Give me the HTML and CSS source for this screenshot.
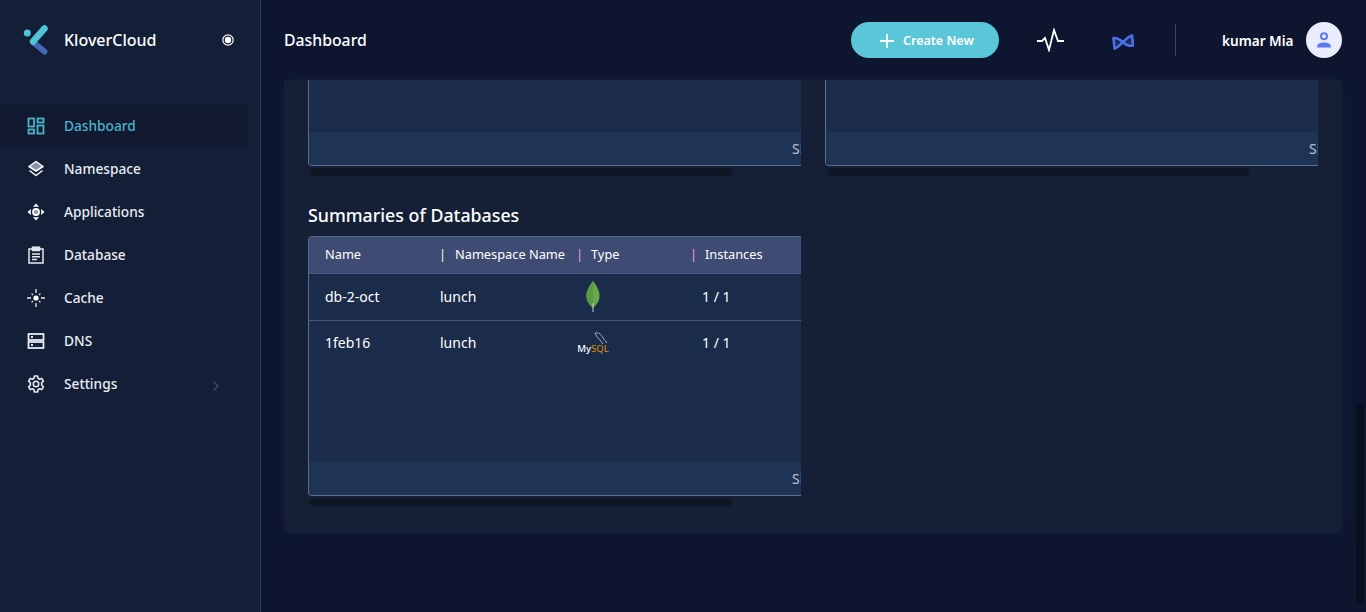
FILE: index.html
```html
<!DOCTYPE html>
<html>
<head>
  <meta charset="utf-8">
  <title>KloverCloud Dashboard</title>
  <link rel="stylesheet" href="styles.css">
</head>
<body>
<div class="app">
  <aside class="sidebar">
    <div class="brand">
      <svg class="brand-logo" width="28" height="30" viewBox="0 0 28 30" fill="none" stroke-linecap="round">
        <circle cx="4.300" cy="8" r="3.500" fill="#4fc3d8"/>
        <path d="M11 18 L21.500 26.500" stroke="#4468b8" stroke-width="6"/>
        <path d="M21.500 3.500 L10 16.500" stroke="#4fc3d8" stroke-width="6.500"/>
      </svg>
      <span class="brand-name">KloverCloud</span>
      <svg class="brand-dot" width="14" height="14" viewBox="0 0 14 14">
        <circle cx="7" cy="7" r="5.2" fill="none" stroke="#fff" stroke-width="1.2"/>
        <circle cx="7" cy="7" r="3.2" fill="#fff"/>
      </svg>
    </div>
    <nav class="menu">
      <a class="menu-item active">
        <svg class="menu-icon" viewBox="0 0 18 18" fill="none" stroke="#4bb4cb" stroke-width="1.800">
          <rect x="1.500" y="1.500" width="5.500" height="8"/><rect x="10.500" y="1.500" width="6" height="4"/>
          <rect x="1.500" y="12.500" width="5.500" height="4"/><rect x="10.500" y="8.500" width="6" height="8"/>
        </svg>
        <span>Dashboard</span>
      </a>
      <a class="menu-item">
        <svg class="menu-icon" viewBox="0 0 18 18" fill="none" stroke="#fff" stroke-width="1.500" stroke-linejoin="round">
          <path d="M9 1.500 L16 6.500 L9 11 L2 6.500 Z" fill="#8b93a8"/><path d="M2.500 10.500 L9 15.500 L15.500 10.500"/>
        </svg>
        <span>Namespace</span>
      </a>
      <a class="menu-item">
        <svg class="menu-icon" viewBox="0 0 18 18" fill="#fff">
          <circle cx="9" cy="9" r="3" fill="#8b93a8" stroke="#fff" stroke-width="1.800"/>
          <path d="M9 .5 L12 3.800 H6 Z M9 17.500 L12 14.200 H6 Z M.5 9 L3.800 6 V12 Z M17.500 9 L14.200 6 V12 Z"/>
        </svg>
        <span>Applications</span>
      </a>
      <a class="menu-item">
        <svg class="menu-icon" viewBox="0 0 18 18" fill="none" stroke="#e6e9f0" stroke-width="1.500">
          <path d="M5.500 3 H2 V17 H16 V3 H12.500"/><rect x="5.500" y="1.200" width="7" height="3.300" fill="#e6e9f0"/>
          <path d="M5 8 H13 M5 10.800 H13 M5 13.600 H10"/>
        </svg>
        <span>Database</span>
      </a>
      <a class="menu-item">
        <svg class="menu-icon" viewBox="0 0 18 18" fill="none" stroke="#e6e9f0" stroke-width="1.300">
          <circle cx="9" cy="9" r="2.600" fill="#fff" stroke="none"/>
          <path d="M9 0 V4 M9 14 V18 M0 9 H4 M14 9 H18 M4.600 4.600 L6 6 M12 12 L13.400 13.400 M13.400 4.600 L12 6 M6 12 L4.600 13.400"/>
        </svg>
        <span>Cache</span>
      </a>
      <a class="menu-item">
        <svg class="menu-icon" viewBox="0 0 18 18" fill="none" stroke="#e6e9f0" stroke-width="1.800">
          <rect x="1.500" y="2" width="15" height="6"/><rect x="1.500" y="10" width="15" height="6"/>
          <path d="M4 5 H6 M4 13 H6"/>
        </svg>
        <span>DNS</span>
      </a>
      <a class="menu-item">
        <svg class="menu-icon" viewBox="0 0 18 18" fill="none" stroke="#e6e9f0" stroke-width="1.600" stroke-linejoin="round">
          <path d="M7.400 1 H10.600 L11 3.200 L12.700 4.200 L14.800 3.400 L16.400 6.100 L14.700 7.600 V9.900 L16.400 11.900 L14.800 14.600 L12.700 13.800 L11 14.800 L10.600 17 H7.400 L7 14.800 L5.300 13.800 L3.200 14.600 L1.600 11.900 L3.300 10.400 V7.600 L1.600 6.100 L3.200 3.400 L5.300 4.200 L7 3.200 Z"/>
          <circle cx="9" cy="9" r="2.700"/>
        </svg>
        <span>Settings</span>
        <svg class="menu-arrow" width="8" height="12" viewBox="0 0 8 12" fill="none" stroke="#3c4668" stroke-width="1.500">
          <path d="M1.500 1.500 L6 6 L1.500 10.500"/>
        </svg>
      </a>
    </nav>
  </aside>

  <div class="main">
    <header class="topbar">
      <h1 class="page-title">Dashboard</h1>
      <button class="create-btn">
        <svg width="16" height="16" viewBox="0 0 16 16" stroke="#fff" stroke-width="1.800"><path d="M8 1 V15 M1 8 H15"/></svg>
        <span>Create New</span>
      </button>
      <svg class="pulse-icon" width="29" height="24" viewBox="0 0 29 24" fill="none" stroke="#fff" stroke-width="1.800">
        <path d="M1 13 H6 L9 10 L13 22 L18 2 L22 13 H28"/>
      </svg>
      <svg class="bow-icon" width="22" height="16" viewBox="0 0 22 16" fill="rgba(79, 111, 232, .25)" stroke="#4f6fe8" stroke-width="2.600" stroke-linejoin="round">
        <path d="M1.500 4 C6 3.500 8 5.500 11 8 C14 5.500 16 2.500 20 1.500 L21 11.500 C16 12.500 14 10.500 11 8 C8 10.500 7 13 2.500 14.500 Z"/>
      </svg>
      <div class="divider"></div>
      <span class="user-name">kumar Mia</span>
      <div class="avatar">
        <svg width="18" height="18" viewBox="0 0 18 18" fill="none" stroke="#5a7cf3" stroke-width="2">
          <circle cx="9" cy="5.300" r="3"/><path d="M2 16.500 C2 12.500 5 11.500 9 11.500 C13 11.500 16 12.500 16 16.500 Z" fill="#5a7cf3" stroke="none"/>
        </svg>
      </div>
    </header>

    <main class="content">
      <section class="panel">
        <div class="top-row">
          <div>
            <div class="card card-cut">
              <div class="card-inner">
                <div class="card-body body-short"></div>
                <div class="card-foot">Showing</div>
              </div>
            </div>
            <div class="h-thumb"></div>
          </div>
          <div>
            <div class="card card-cut">
              <div class="card-inner">
                <div class="card-body body-short"></div>
                <div class="card-foot">Showing</div>
              </div>
            </div>
            <div class="h-thumb"></div>
          </div>
        </div>

        <h2 class="section-title">Summaries of Databases</h2>
        <div class="db-block">
          <div class="card">
            <div class="card-inner">
              <div class="table-row table-head">
                <div class="name-cell">Name</div>
                <div class="head-cell"><span class="sep sep-first">|</span>Namespace Name</div>
                <div class="head-cell"><span class="sep">|</span>Type</div>
                <div class="head-cell"><span class="sep">|</span>Instances</div>
              </div>
              <div class="table-row db-row">
                <div class="name-cell">db-2-oct</div>
                <div class="ns-cell">lunch</div>
                <div class="type-cell">
                  <svg width="14" height="31" viewBox="0 0 16 31" preserveAspectRatio="none">
                    <path d="M8 0 C12 5 15.500 9 15.500 15 C15.500 21 11 24.500 8 27 C5 24.500 .5 21 .5 15 C.5 9 4 5 8 0 Z" fill="#68a94a"/>
                    <path d="M8 0 C5 5 .5 9 .5 15 C.5 21 5 24.500 8 27 Z" fill="#5a9a43"/>
                    <path d="M8 22 V31" stroke="#c3cdd0" stroke-width="1.200"/>
                  </svg>
                </div>
                <div class="count-cell">1 / 1</div>
              </div>
              <div class="table-row db-row db-row-last">
                <div class="name-cell">1feb16</div>
                <div class="ns-cell">lunch</div>
                <div class="type-cell mysql">
                  <svg class="mysql-fin" width="14" height="13" viewBox="0 0 14 13" fill="none" stroke="#c2c8d2" stroke-width=".8">
                    <path d="M1 1 C5 0 8 3 9 6 L13 11 M1 1 L3 5 L6 8 L9 12"/>
                  </svg>
                  <span class="mysql-word">My<b>SQL</b></span>
                </div>
                <div class="count-cell">1 / 1</div>
              </div>
              <div class="card-body body-tall"></div>
              <div class="card-foot">Showing</div>
            </div>
          </div>
          <div class="h-thumb"></div>
        </div>
      </section>
    </main>
  </div>
  <div class="v-thumb"></div>
</div>
</body>
</html>
```

FILE: styles.css
```css
* {
  box-sizing: border-box;
}
body {
  margin: 0;
  background-color: #0d152f;
  color: #fff;
  font-family: "Noto Sans", "Open Sans", sans-serif;
  font-size: 14px;
}
.app {
  display: flex;
  height: 612px;
  overflow: hidden;
  position: relative;
}

/* sidebar */
.sidebar {
  width: 261px;
  flex-shrink: 0;
  background-color: #131e37;
  border-right: 1px solid #2b3650;
}
.brand {
  display: flex;
  align-items: center;
  height: 80px;
  padding-left: 23px;
}
.brand-logo {
  width: 28px;
  margin-right: 13px;
}
.brand-name {
  width: 157px;
  font-size: 16px;
  font-weight: 500;
}
.menu {
  padding-top: 24px;
}
.menu-item {
  display: flex;
  align-items: center;
  width: 248px;
  height: 43px;
  padding-left: 27px;
  color: #e9ecf3;
  font-size: 13.7px;
  font-weight: 500;
}
.menu-item.active {
  height: 41px;
  margin-bottom: 1px;
  margin-top: 1px;
  color: #4bb4cb;
  background-color: #111a30;
  border-radius: 0 4px 4px 0;
}
.menu-icon {
  width: 18px;
  height: 18px;
  margin-right: 19px;
}
.menu-arrow {
  margin-left: 95px;
  margin-top: 4px;
}

/* header */
.main {
  flex: 1;
  min-width: 0;
  display: flex;
  flex-direction: column;
}
.topbar {
  display: flex;
  align-items: center;
  flex-shrink: 0;
  height: 80px;
  padding-left: 23px;
  background-color: #0d152f;
}
.page-title {
  width: 567px;
  margin: 0;
  font-size: 15.8px;
  font-weight: 500;
}
.create-btn {
  display: flex;
  align-items: center;
  width: 148px;
  height: 36px;
  margin: 0;
  padding: 1px 0 0 28px;
  border: none;
  border-radius: 18px;
  background-color: #5cc6d9;
  color: #fff;
  font-family: inherit;
  font-size: 12.5px;
  font-weight: 600;
}
.create-btn span {
  margin-left: 8px;
}
.pulse-icon {
  margin-left: 37px;
}
.bow-icon {
  margin-left: 47px;
  margin-top: 3px;
}
.divider {
  width: 1px;
  height: 32px;
  margin-left: 41px;
  background-color: #39445f;
}
.user-name {
  width: 84px;
  margin-left: 46px;
  font-size: 13.6px;
  font-weight: 600;
}
.avatar {
  display: flex;
  align-items: center;
  justify-content: center;
  width: 36px;
  height: 36px;
  border-radius: 50%;
  background-color: #e9edff;
}

/* content */
.content {
  flex: 1;
  padding: 0 24px 0 23px;
}
.panel {
  height: 453px;
  padding: 0 24px;
  background-color: #151f36;
  border-radius: 0 0 6px 6px;
  box-shadow: 0 0 14px rgba(28, 38, 68, .55);
}
.top-row {
  display: flex;
  gap: 24px;
}
.top-row > div {
  width: 493px;
}
.card {
  width: 493px;
  overflow: hidden;
  background-color: #1b2b4a;
  border: 1px solid #5a6c8d;
  border-right: none;
  border-radius: 4px 0 0 4px;
}
.card-cut {
  border-top: none;
  border-radius: 0 0 0 4px;
}
.card-inner {
  width: 900px;
}
.card-body {
  background-color: #1b2b4a;
}
.body-short {
  height: 52px;
}
.body-tall {
  height: 95px;
}
.card-foot {
  height: 33px;
  padding: 7px 0 0 483px;
  background-color: #1f3355;
  color: #b9c3d6;
  line-height: 20px;
  white-space: nowrap;
}
.h-thumb {
  width: 422px;
  height: 8px;
  margin: 2px 0 0 2px;
  background-color: #0f1625;
  border-radius: 4px;
}
.section-title {
  height: 24px;
  margin: 27px 0 9px;
  font-size: 17.8px;
  font-weight: 500;
  line-height: 24px;
}

/* table */
.table-row {
  display: grid;
  grid-template-columns: 132px 137px 114px 1fr;
  align-items: center;
}
.table-head {
  height: 37px;
  padding-bottom: 2px;
  background-color: #3e4c73;
  border-bottom: 1px solid #4d5b80;
  font-size: 12.8px;
}
.name-cell {
  padding-left: 16px;
}
.ns-cell {
  margin-left: -1px;
}
.head-cell {
  display: flex;
  align-items: center;
}
.sep {
  width: 15px;
  margin-left: -2px;
  color: #ff8fd8;
  flex-shrink: 0;
}
.sep-first {
  width: 16px;
  color: #eef0f6;
}
.db-row {
  height: 47px;
  padding-bottom: 2px;
  border-bottom: 1px solid #4a5878;
}
.db-row-last {
  height: 46px;
  padding-bottom: 3px;
  border-bottom: none;
}
.type-cell {
  display: flex;
  justify-content: center;
  width: 30px;
}
.count-cell {
  padding-left: 10px;
}
.mysql {
  position: relative;
  height: 22px;
  align-items: flex-end;
}
.mysql-fin {
  position: absolute;
  top: 0;
  left: 16px;
}
.mysql-word {
  font-size: 9.5px;
  font-weight: 500;
  line-height: 10px;
  white-space: nowrap;
}
.mysql-word b {
  color: #e48e00;
  font-weight: 400;
}

/* page scrollbar */
.v-thumb {
  position: absolute;
  top: 403px;
  right: 2px;
  width: 8px;
  height: 201px;
  background-color: #08101f;
  border-radius: 4px;
}
```
